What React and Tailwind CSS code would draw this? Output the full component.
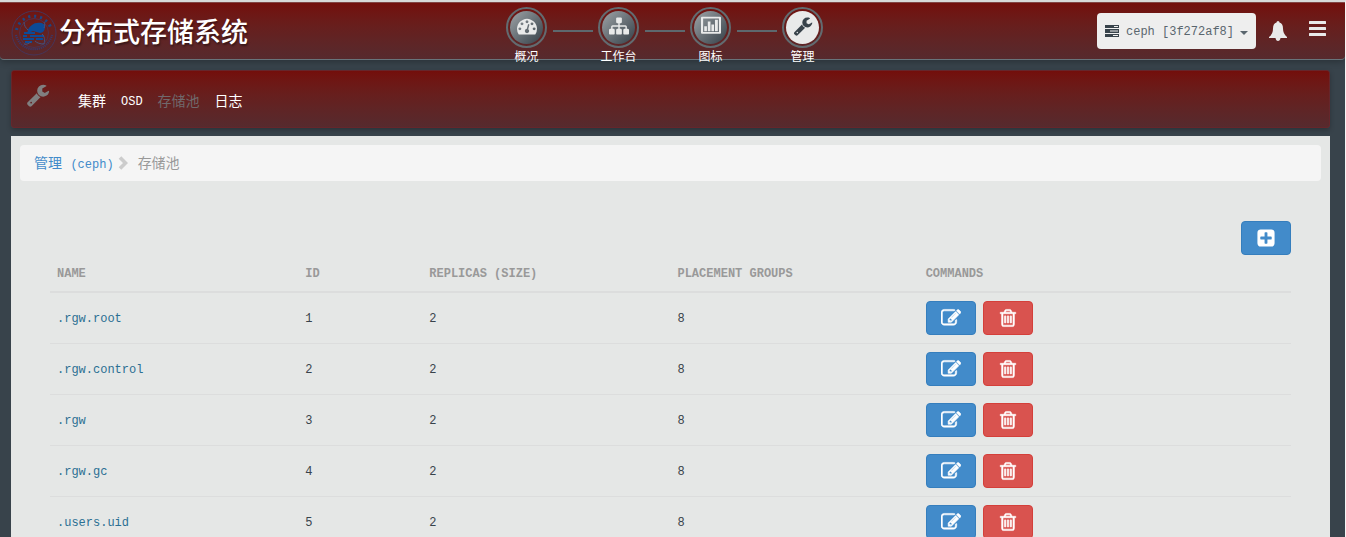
import React from "react";

const ICONS = {
  gauge:
    "M384 1152q0-53-37.500-90.500t-90.500-37.500-90.500 37.500-37.500 90.500 37.500 90.500 90.500 37.500 90.500-37.500 37.500-90.500zm192-448q0-53-37.500-90.500t-90.500-37.500-90.500 37.500-37.500 90.500 37.500 90.500 90.500 37.500 90.500-37.500 37.500-90.500zm428 481l101-382q6-26-7.500-48.500t-38.500-29.500-48 6.500-30 39.500l-101 382q-60 5-107 43.500t-63 98.500q-20 77 20 146t117 89 146-20 89-117q16-60-6-117t-72-91zm660-33q0-53-37.500-90.500t-90.500-37.500-90.500 37.500-37.500 90.500 37.500 90.500 90.500 37.500 90.500-37.500 37.500-90.500zm-640-640q0-53-37.500-90.500t-90.500-37.500-90.500 37.500-37.500 90.500 37.500 90.500 90.500 37.500 90.500-37.500 37.500-90.500zm448 192q0-53-37.500-90.500t-90.500-37.500-90.500 37.500-37.500 90.500 37.500 90.500 90.500 37.500 90.500-37.500 37.500-90.500zm320 448q0 261-141 483-19 29-54 29h-1402q-35 0-54-29-141-221-141-483 0-182 71-348t191-286 286-191 348-71 348 71 286 191 191 286 71 348z",
  sitemap:
    "M1792 1248v320q0 40-28 68t-68 28h-320q-40 0-68-28t-28-68v-320q0-40 28-68t68-28h96v-192h-512v192h96q40 0 68 28t28 68v320q0 40-28 68t-68 28h-320q-40 0-68-28t-28-68v-320q0-40 28-68t68-28h96v-192h-512v192h96q40 0 68 28t28 68v320q0 40-28 68t-68 28h-320q-40 0-68-28t-28-68v-320q0-40 28-68t68-28h96v-192q0-52 38-90t90-38h512v-192h-96q-40 0-68-28t-28-68v-320q0-40 28-68t68-28h320q40 0 68 28t28 68v320q0 40-28 68t-68 28h-96v192h512q52 0 90 38t38 90v192h96q40 0 68 28t28 68z",
  chart:
    "M90 60h1612q90 0 90 90v1360q0 90-90 90H90q-90 0-90-90V150q0-90 90-90zM190 230v1200h1412V230zM290 920h240v440H290zM610 500h240v860H610zM930 760h240v600H930zM1250 340h260v1020h-260z",
  wrench:
    "M448 1472q0-26-19-45t-45-19-45 19-19 45 19 45 45 19 45-19 19-45zm644-420l-682 682q-37 37-90 37-52 0-91-37l-106-108q-38-36-38-90 0-53 38-91l681-681q39 98 114.500 173.500t173.500 114.500zm634-435q0 39-23 106-47 134-164.500 217.500t-258.500 83.500q-185 0-316.500-131.500t-131.500-316.500 131.500-316.500 316.500-131.500q58 0 121.500 16.500t107.500 46.500q16 11 16 28t-16 28l-293 169v224l193 107q5-3 79-48.500t135.500-81 70.500-35.500q15 0 23.500 10t8.500 25z",
  edit:
    "M888 1184l116-116-152-152-116 116v56h96v96h56zm440-720q-16-16-33 1l-350 350q-17 17-1 33t33-1l350-350q17-17 1-33zm80 594v190q0 119-84.500 203.500t-203.500 84.500h-832q-119 0-203.500-84.500t-84.500-203.500v-832q0-119 84.500-203.500t203.500-84.500h832q63 0 117 25 15 7 18 23 3 17-9 29l-49 49q-14 14-32 8-23-6-45-6h-832q-66 0-113 47t-47 113v832q0 66 47 113t113 47h832q66 0 113-47t47-113v-126q0-13 9-22l64-64q15-15 35-7t20 29zm-96-738l288 288-672 672h-288v-288zm444 132l-92 92-288-288 92-92q28-28 68-28t68 28l152 152q28 28 28 68t-28 68z",
  trash:
    "M704 736v576q0 14-9 23t-23 9h-64q-14 0-23-9t-9-23v-576q0-14 9-23t23-9h64q14 0 23 9t9 23zm256 0v576q0 14-9 23t-23 9h-64q-14 0-23-9t-9-23v-576q0-14 9-23t23-9h64q14 0 23 9t9 23zm256 0v576q0 14-9 23t-23 9h-64q-14 0-23-9t-9-23v-576q0-14 9-23t23-9h64q14 0 23 9t9 23zm128 724v-948h-896v948q0 22 7 40.500t14.500 27 10.500 8.500h832q3 0 10.500-8.500t14.500-27 7-40.500zm-672-1076h448l-48-117q-7-9-17-11h-317q-10 2-17 11zm928 32v64q0 14-9 23t-23 9h-96v948q0 83-47 143.500t-113 60.500h-832q-66 0-113-58.500t-47-141.500v-952h-96q-14 0-23-9t-9-23v-64q0-14 9-23t23-9h309l70-167q15-37 54-63t79-26h320q40 0 79 26t54 63l70 167h309q14 0 23 9t9 23z",
  plus:
    "M1408 960v-128q0-26-19-45t-45-19h-320v-320q0-26-19-45t-45-19h-128q-26 0-45 19t-19 45v320h-320q-26 0-45 19t-19 45v128q0 26 19 45t45 19h320v320q0 26 19 45t45 19h128q26 0 45-19t19-45v-320h320q26 0 45-19t19-45zm256-544v960q0 119-84.500 203.500t-203.500 84.500h-960q-119 0-203.500-84.500t-84.500-203.500v-960q0-119 84.500-203.500t203.500-84.500h960q119 0 203.500 84.500t84.500 203.500z",
};

function Icon({ name, className, weight = 0 }) {
  return (
    <svg
      viewBox="0 0 1792 1792"
      fill="currentColor"
      fillRule="evenodd"
      stroke={weight ? "currentColor" : "none"}
      strokeWidth={weight}
      className={className}
      aria-hidden="true"
    >
      <path d={ICONS[name]} />
    </svg>
  );
}

function Seal() {
  return (
    <svg viewBox="0 0 46 46" className="size-[46px] shrink-0" fill="none" aria-hidden="true">
      <circle cx="23" cy="23" r="22" stroke="#46355a" strokeWidth="1" />
      <circle cx="23" cy="23" r="14.500" stroke="#46355a" strokeWidth="0.8" />
      <path d="M5.500 20A18 18 0 0 1 40.500 20" stroke="#1c4583" strokeWidth="3" strokeDasharray="2.200 3.800" />
      <path d="M5 25A18.500 18.500 0 0 0 41 25" stroke="#39386a" strokeWidth="2.200" strokeDasharray="1.200 0.900" />
      <path d="M18 18c2-3 5-5 8-5 5-1 8 1 8 4s-2 6-5 6l-7-2-5 2c-1-2 0-4 1-5z" fill="#0c4a97" />
      <path d="M13 23h11M19 26h14M12 26h4M12 29h11M25 29h7M14 32h7" stroke="#0c4a97" strokeWidth="1.800" />
      <path d="M13 12c0 4 2 6 4 8M31 24c3 3 3 6 2 10-4 0-7-1-9-3M13 34c3 1 5-1 7-2M33 12c1 2 1 4 0 6" stroke="#44527e" strokeWidth="1" />
    </svg>
  );
}

const SECTIONS = [
  { label: "概况", icon: "gauge" },
  { label: "工作台", icon: "sitemap" },
  { label: "图标", icon: "chart" },
  { label: "管理", icon: "wrench", active: true },
];

const POOLS = [
  { name: ".rgw.root", id: 1, size: 2, pgs: 8 },
  { name: ".rgw.control", id: 2, size: 2, pgs: 8 },
  { name: ".rgw", id: 3, size: 2, pgs: 8 },
  { name: ".rgw.gc", id: 4, size: 2, pgs: 8 },
  { name: ".users.uid", id: 5, size: 2, pgs: 8 },
];

function SectionNav() {
  return (
    <nav className="mr-[8px] flex shrink-0 gap-[6px] pt-[4px]">
      {SECTIONS.map((s, i) => (
        <React.Fragment key={s.label}>
          {i > 0 && <span className="mt-[23px] h-[2px] w-[40px] bg-[#5d686e]" />}
          <a href="#" className="flex w-[40px] flex-col items-center gap-[2px]">
            <span className="flex size-[41px] shrink-0 items-center justify-center rounded-full border-2 border-[#626b70]">
              <span
                className={
                  s.active
                    ? "flex size-[33px] items-center justify-center rounded-full bg-[#e9eaea] pb-[3px] text-[#38434b]"
                    : "flex size-[33px] items-center justify-center rounded-full bg-linear-to-br from-[#a0a5a8] to-[#364149] pb-[3px] text-[#e9eaea]"
                }
              >
                <Icon name={s.icon} className="size-[20px]" />
              </span>
            </span>
            <span className="text-[12px] leading-[16px] whitespace-nowrap text-white">{s.label}</span>
          </a>
        </React.Fragment>
      ))}
    </nav>
  );
}

function Header() {
  return (
    <header className="flex h-[57px] items-start rounded-b-[4px] border-b border-[#68747b] bg-linear-to-b from-[#730e0b] to-[#562a2e] shadow-[0_2px_6px_rgba(0,0,0,0.25)]">
      <a href="#" className="flex flex-1 items-center gap-[2px] pt-[7px] pl-[11px]">
        <Seal />
        <span className="pt-[4px] text-[27px] leading-[40px] font-medium whitespace-nowrap text-white [text-shadow:1px_2px_2px_rgba(0,0,0,0.4)]">
          分布式存储系统
        </span>
      </a>
      <SectionNav />
      <div className="flex flex-1 items-start justify-end pr-[19px]">
        <div className="relative mt-[10px] flex items-center rounded-[4px] bg-[#eeeeee] text-[#38434b]">
          <svg viewBox="0 0 14 12" className="pointer-events-none absolute left-[8px] h-[12px] w-[14px]" aria-hidden="true">
            <path d="M0 0h14v3H0zM0 4h14v4H0zM0 9h14v3H0z" fill="currentColor" />
            <path d="M9 1h4v1H9zM5 5.500h8v1H5zM8 10h5v1H8z" fill="#eee" />
          </svg>
          <select
            aria-label="Cluster"
            className="h-[36px] w-[159px] appearance-none rounded-[4px] bg-transparent pt-[2px] pl-[29px] text-[12px] text-[#5a666e]"
          >
            <option>ceph [3f272af8]</option>
          </select>
          <svg viewBox="0 0 8 4" className="pointer-events-none absolute right-[8px] mt-[4px] h-[4px] w-[8px]" aria-hidden="true">
            <path d="M0 0h8L4 4z" fill="#5a666e" />
          </svg>
        </div>
        <button type="button" aria-label="Notifications" className="mt-[18px] ml-[13px] text-[#e9eaea]">
          <svg viewBox="0 0 18 20" fill="currentColor" className="h-[20px] w-[18px]" aria-hidden="true">
            <path d="M9 0q1.500 0 1.500 1.600Q14 2.600 14 7.500q0 5.500 4 8.500v1h-6.500Q11 20 9 20t-2.500-3H0v-1q4-3 4-8.500 0-4.900 3.500-5.900Q7.500 0 9 0z" />
          </svg>
        </button>
        <button type="button" aria-label="Menu" className="mt-[18px] ml-[22px] text-[#e9eaea]">
          <svg viewBox="0 0 17 15" fill="currentColor" className="h-[15px] w-[17px]" aria-hidden="true">
            <rect width="17" height="3" rx="0.500" />
            <rect y="6" width="17" height="3" rx="0.500" />
            <rect y="12" width="17" height="3" rx="0.500" />
          </svg>
        </button>
      </div>
    </header>
  );
}

function SubNav() {
  return (
    <nav className="flex h-[58px] items-center gap-[15px] rounded-[3px] border border-[#66262b] bg-linear-to-b from-[#730e0b] to-[#562a2e] px-[14px] pt-[6px] text-[14px] text-white shadow-[0_2px_5px_rgba(0,0,0,0.25)]">
      <Icon name="wrench" className="mr-[13px] mb-[14px] size-[24px] text-[#807f80]" />
      <a href="#">集群</a>
      <a href="#" className="text-[12px]">OSD</a>
      <a href="#" className="text-[#70696c]">存储池</a>
      <a href="#">日志</a>
    </nav>
  );
}

function ActionButton({ icon, label, danger }) {
  return (
    <button
      type="button"
      aria-label={label}
      className={
        danger
          ? "flex h-[34px] w-[50px] items-center justify-center rounded-[4px] border border-[#d43f3a] bg-[#d9534f] text-white"
          : "flex h-[34px] w-[50px] items-center justify-center rounded-[4px] border border-[#357ebd] bg-[#428bca] text-white"
      }
    >
      <Icon name={icon} weight={icon === "plus" ? 0 : 50} className="size-[20px]" />
    </button>
  );
}

function PoolTable() {
  return (
    <table className="w-full table-fixed border-collapse text-left text-[12px] text-[#38434b]">
      <thead>
        <tr className="border-b-2 border-[#dcdddd] leading-[20px] text-[#999999]">
          <th className="w-1/5 px-[7px] pt-[9px] pb-[7px]">NAME</th>
          <th className="w-1/10 px-[7px] pt-[9px] pb-[7px]">ID</th>
          <th className="w-1/5 px-[7px] pt-[9px] pb-[7px]">REPLICAS (SIZE)</th>
          <th className="w-1/5 px-[7px] pt-[9px] pb-[7px]">PLACEMENT GROUPS</th>
          <th className="px-[7px] pt-[9px] pb-[7px]">COMMANDS</th>
        </tr>
      </thead>
      <tbody>
        {POOLS.map((p) => (
          <tr key={p.id} className="border-b border-[#dcdddd]">
            <td className="px-[7px] pt-[10px] pb-[8px] text-[#2b6f93]">{p.name}</td>
            <td className="px-[7px] pt-[10px] pb-[8px]">{p.id}</td>
            <td className="px-[7px] pt-[10px] pb-[8px]">{p.size}</td>
            <td className="px-[7px] pt-[10px] pb-[8px]">{p.pgs}</td>
            <td className="px-[7px] py-[8px]">
              <div className="flex gap-[7px]">
                <ActionButton icon="edit" label={"Edit " + p.name} />
                <ActionButton icon="trash" label={"Delete " + p.name} danger />
              </div>
            </td>
          </tr>
        ))}
      </tbody>
    </table>
  );
}

export default function App() {
  return (
    <div className="h-screen overflow-hidden border-t-2 border-r border-t-[#d9d9d9] border-r-[#f4f4f4] bg-[#38434b] font-['Liberation_Mono','Noto_Sans_CJK_SC',monospace]">
      <div className="border-t border-[#8a4a48]">
        <Header />
      </div>
      <main className="flex flex-col gap-[8px] pt-[10px] pr-[15px] pl-[11px]">
        <SubNav />
        <section className="bg-[#e5e7e6] p-[9px]">
          <div className="flex h-[36px] items-center rounded-[4px] bg-[#f5f5f5] px-[14px] pt-[2px] text-[14px] text-[#999999]">
            <a href="#" className="text-[#428bca]">
              管理 <span className="text-[12px]">(ceph)</span>
            </a>
            <svg viewBox="0 0 10 14" className="mr-[10px] ml-[4px] mb-[2px] h-[14px] w-[10px]" fill="none" aria-hidden="true">
              <path d="M2 1.500L7.500 7 2 12.500" stroke="#cccccc" strokeWidth="3.600" />
            </svg>
            <span>存储池</span>
          </div>
          <div className="px-[30px] pt-[40px]">
            <div className="flex justify-end">
              <ActionButton icon="plus" label="Add pool" />
            </div>
            <PoolTable />
          </div>
        </section>
      </main>
    </div>
  );
}
